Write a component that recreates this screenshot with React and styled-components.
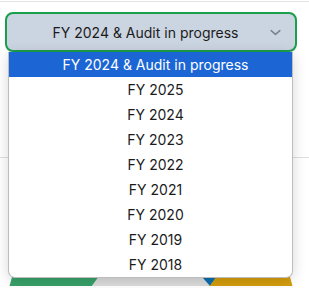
import styled, { createGlobalStyle } from "styled-components";

const GlobalStyle = createGlobalStyle`
    html, body {
        margin: 0;
        padding: 0;
        background: #fff;
        font-family: Inter, "Noto Sans", sans-serif;
    }
`;

const Page = styled.div`
    width: 309px;
    height: 288px;
    overflow: hidden;
    position: relative;
    display: flex;
    flex-direction: column;
`;

const TopRule = styled.div`
    margin-top: 1px;
    height: 1px;
    background: #e3e3e3;
`;

const SelectArea = styled.div`
    position: relative;
    padding: 10px 12px 0 5px;
`;

const SelectButton = styled.div`
    height: 36px;
    box-sizing: content-box;
    border: 2px solid #1a9f4b;
    border-radius: 8px;
    background: #cbd4e1;
    display: flex;
    align-items: center;
    padding: 0 12px 0 16px;
    color: #1b1b1b;
    font-size: 14px;
`;

const SelectLabel = styled.span`
    flex: 1;
    text-align: center;
`;

const Chevron = styled.svg`
    width: 15px;
    height: 15px;
    color: #7a8291;
`;

const OptionList = styled.ul`
    position: absolute;
    z-index: 2;
    top: 52px;
    left: 8px;
    width: 285px;
    margin: 0;
    padding: 0;
    list-style: none;
    background: #fff;
    border: 1px solid #bdbdbd;
    border-top: none;
    border-radius: 0 0 7px 7px;
    box-sizing: border-box;
    box-shadow: 0 2px 14px rgba(0, 0, 0, 0.16);
    overflow: hidden;
`;

const Option = styled.li`
    height: 25px;
    display: flex;
    align-items: center;
    justify-content: center;
    padding-left: 10px;
    font-size: 14px;
    color: ${(props) => (props.active ? "#fff" : "#1b1b1b")};
    background: ${(props) => (props.active ? "#1b66d4" : "transparent")};
`;

const Spacer = styled.div`
    height: 105px;
`;

const Divider = styled.div`
    height: 1px;
    background: #dedede;
`;

const Chart = styled.svg`
    display: block;
    width: 309px;
    height: 128px;
`;

const options = [
    "FY 2024 & Audit in progress",
    "FY 2025",
    "FY 2024",
    "FY 2023",
    "FY 2022",
    "FY 2021",
    "FY 2020",
    "FY 2019",
    "FY 2018",
];

const App = () => {
    return (
        <Page>
            <GlobalStyle />
            <TopRule />
            <SelectArea>
                <SelectButton>
                    <SelectLabel>FY 2024 &amp; Audit in progress</SelectLabel>
                    <Chevron viewBox="0 0 24 24" fill="none" stroke="currentColor" strokeWidth="2.4" strokeLinecap="round" strokeLinejoin="round">
                        <path d="M5 9l7 6 7-6" />
                    </Chevron>
                </SelectButton>
            </SelectArea>
            <OptionList>
                {options.map((o, i) => (
                    <Option key={o + i} active={i === 0}>{o}</Option>
                ))}
            </OptionList>
            <Spacer />
            <Divider />
            {/* chart sits behind the open list, only its top edge shows */}
            <Chart viewBox="0 160 309 128">
                <defs>
                    <clipPath id="pie">
                        <circle cx="151" cy="320" r="145" />
                    </clipPath>
                </defs>
                <g clipPath="url(#pie)">
                    <rect x="0" y="160" width="309" height="128" fill="#dcdcdc" />
                    <polygon points="0,160 185,160 83,300 0,300" fill="#38a169" />
                    <polygon points="98,160 210,288 303,160" fill="#0b6fae" />
                    <polygon points="303,160 320,160 320,300 201,300" fill="#d49d0c" />
                </g>
            </Chart>
        </Page>
    );
};

export default App;
